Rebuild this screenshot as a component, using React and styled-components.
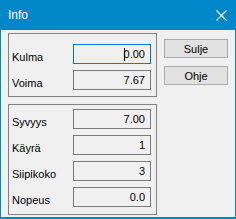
import React from 'react';
import styled, {createGlobalStyle} from "styled-components";

const GlobalStyle = createGlobalStyle`
body {
  margin: 0;
  font-family: "Liberation Sans", Arial, sans-serif;
}
`;

const Window = styled.div`
width: 236px;
height: 219px;
box-sizing: border-box;
display: flex;
flex-direction: column;
background-color: #f0f0f0;
border: 1px solid #0087c9;
border-top: none;
border-bottom-width: 2px;
`;
const TitleBar = styled.div`
height: 30px;
flex-shrink: 0;
display: flex;
align-items: center;
justify-content: space-between;
background-color: #0087c9;
color: #fff;
padding: 0 9px 0 8px;
margin: 0 -1px;
font-size: 12px;
`;
const Body = styled.div`
flex-grow: 1;
display: flex;
gap: 7px;
padding: 3px 0 0 7px;
`;
const Groups = styled.div`
display: flex;
flex-direction: column;
gap: 7px;
`;
const Group = styled.div`
width: 149px;
box-sizing: border-box;
border: 1px solid #828282;
display: flex;
flex-direction: column;
gap: 6px;
padding: ${p => p.$top}px 5px ${p => p.$bottom}px 3px;
`;
const Row = styled.div`
display: flex;
align-items: flex-end;
justify-content: space-between;
`;
const Label = styled.span`
font-size: 11px;
color: #000;
padding-bottom: 1px;
`;
const Field = styled.div`
width: 78px;
height: 20px;
box-sizing: border-box;
border: 1px solid ${p => p.$focus ? "#0078d7" : "#7a7a7a"};
background-color: #f0f0f0;
display: flex;
align-items: center;
justify-content: flex-end;
padding-right: 5px;
font-size: 11px;
color: #000;
`;
const Caret = styled.span`
display: inline-block;
width: 1px;
height: 13px;
margin-right: -1px;
background-color: #000;
`;
const Buttons = styled.div`
display: flex;
flex-direction: column;
gap: 8px;
padding-top: 6px;
`;
const Button = styled.button`
width: 64px;
height: 19px;
box-sizing: border-box;
border: 1px solid #adadad;
background-color: #e1e1e1;
font-family: inherit;
font-size: 11px;
color: #000;
padding: 0;
`;

const CloseIcon = () => (
    <svg width="11" height="11" viewBox="0 0 11 11">
        <path d="M0.5 0.5 L10.5 10.5 M10.5 0.5 L0.5 10.5" stroke="#fff" strokeWidth="1.1" fill="none"/>
    </svg>
);

const InfoRow = ({label, value, focus}) => <Row>
    <Label>{label}</Label>
    <Field $focus={focus}>{focus && <Caret/>}{value}</Field>
</Row>;

const App = () => <>
    <GlobalStyle/>
    <Window>
        <TitleBar>
            <span>Info</span>
            <CloseIcon/>
        </TitleBar>
        <Body>
            <Groups>
                <Group $top={10} $bottom={6}>
                    <InfoRow label="Kulma" value="0.00" focus/>
                    <InfoRow label="Voima" value="7.67"/>
                </Group>
                <Group $top={4} $bottom={7}>
                    <InfoRow label="Syvyys" value="7.00"/>
                    <InfoRow label="Käyrä" value="1"/>
                    <InfoRow label="Siipikoko" value="3"/>
                    <InfoRow label="Nopeus" value="0.0"/>
                </Group>
            </Groups>
            <Buttons>
                <Button>Sulje</Button>
                <Button>Ohje</Button>
            </Buttons>
        </Body>
    </Window>
</>;

export default App;
